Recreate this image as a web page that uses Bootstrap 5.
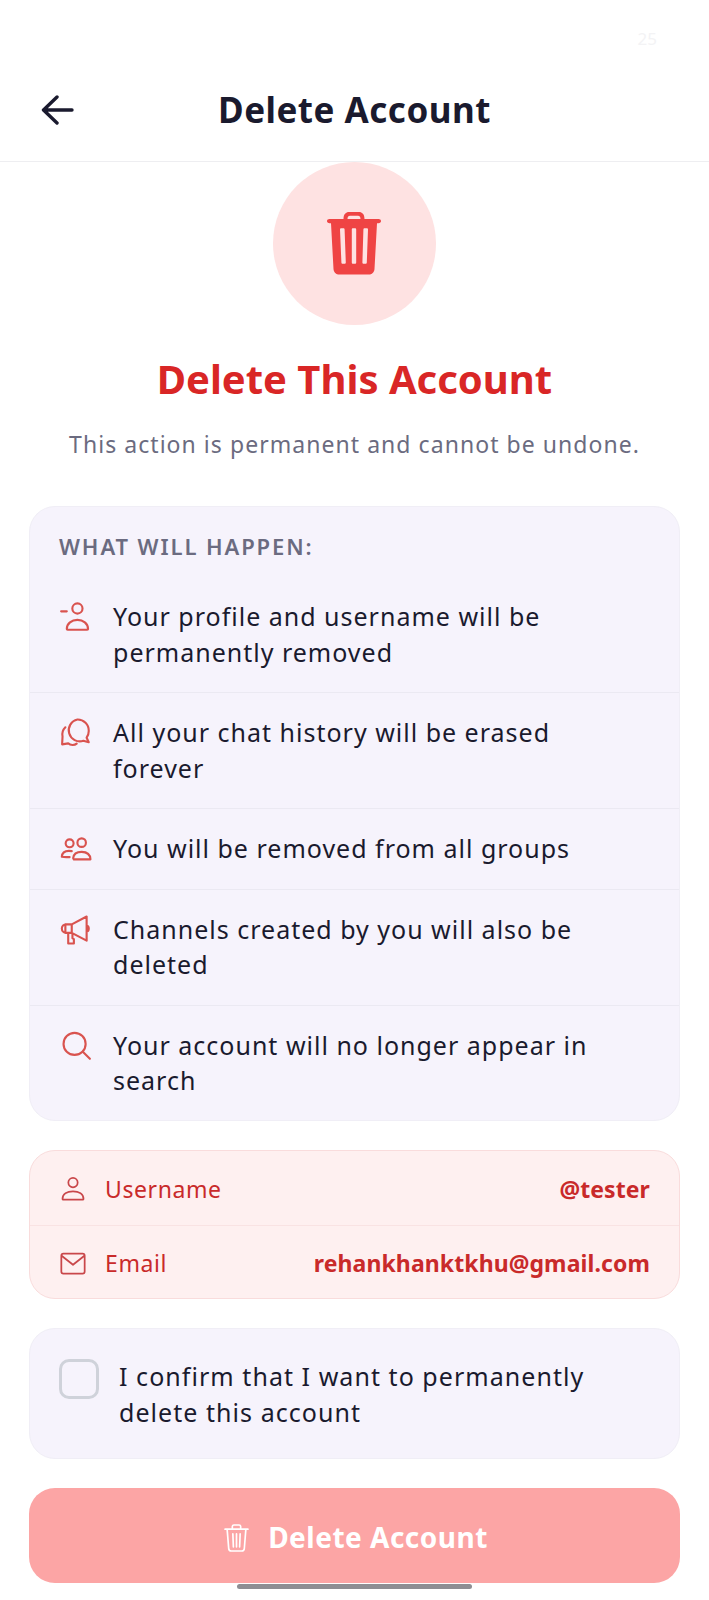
<!DOCTYPE html>
<html lang="en">
<head>
  <meta charset="UTF-8" />
  <meta name="viewport" content="width=device-width, initial-scale=1.0" />
  <title>Delete Account</title>
  <link href="https://cdn.jsdelivr.net/npm/bootstrap@5.3.2/dist/css/bootstrap.min.css" rel="stylesheet" />
  <style>
    body {
      font-family: "Noto Sans", sans-serif;
      color: #1a1a2e;
      background: #fff;
      min-height: 1600px;
      position: relative;
    }
    .status-row { height: 78px; padding: 28px 52px 0 0; font-size: 17px; line-height: 22px; color: #f3f3f5; }
    .top-bar { height: 84px; padding: 0 41px 20px; border-bottom: 1px solid #eeeef1; position: relative; }
    .top-title { font-size: 35px; font-weight: 700; line-height: 1; margin: 0; letter-spacing: .5px; }
    .back-btn { position: absolute; left: 41px; top: 50%; transform: translateY(-50%); margin-top: -10px; line-height: 0; }
    .hero-circle { width: 163px; height: 163px; background: #fee2e2; margin: 0 auto; }
    .hero-circle svg { margin: -2px 1px 0 0; }
    .hero-title { font-size: 40px; font-weight: 700; color: #d92626; line-height: 46px; margin: 31px 0 0; }
    .hero-sub { font-size: 23px; line-height: 32px; color: #6b6b80; margin: 26px 0 0; letter-spacing: 1.05px; }
    .soft-box { background: #f6f3fc; border: 1px solid #f0eef6; border-radius: 26px; margin: 0 29px; }
    .what-box { margin-top: 46px; padding-top: 25px; }
    .what-label { font-size: 22px; line-height: 28px; font-weight: 600; color: #6b6b80; letter-spacing: 1.9px; padding: 0 29px; margin-bottom: 17px; }
    .what-row { padding: 22px 60px 21.7px 29px; gap: 20px; border-bottom: 1px solid #ebe9f2; font-size: 25px; line-height: 35.7px; letter-spacing: 1px; }
    .what-row:last-child { border-bottom: 0; padding-bottom: 21px; }
    .what-row svg { flex: none; width: 34px; height: 34px; margin-top: 1px; }
    .ico { fill: none; stroke: #d9534f; stroke-width: 1.5; stroke-linecap: round; stroke-linejoin: round; }
    .info-box { background: #fef0f0; border: 1px solid #f9dcdc; border-radius: 26px; margin: 29px 29px 0; color: #c92a2a; }
    .info-row { height: 73.5px; padding: 2px 29px 0; font-size: 23px; letter-spacing: .6px; }
    .info-row + .info-row { border-top: 1px solid #f9e3e3; }
    .info-row svg { width: 28px; height: 28px; flex: none; margin-right: 18px; }
    .info-val { margin-left: auto; font-weight: 700; font-size: 23px; color: #c92a2a; letter-spacing: .1px; }
    .info-ico { fill: none; stroke: #c9474a; stroke-width: 1.5; stroke-linecap: round; stroke-linejoin: round; }
    .confirm-box { margin-top: 29px; height: 131px; padding: 29px 29px 0; gap: 20px; font-size: 25px; line-height: 36px; letter-spacing: 1.05px; }
    .check-box { width: 40px; height: 40px; flex: none; border: 3px solid #cfd2da; border-radius: 10px; margin-top: 1px; }
    .delete-btn { display: flex; margin: 29px 29px 0; width: 651px; height: 95px; padding-top: 9px; padding-left: 15px; background: #fca5a5; border: 0; border-radius: 26px; font-size: 28px; font-weight: 700; color: #fff; letter-spacing: .5px; }
    .delete-btn svg { margin-right: 3px; }
    .delete-btn:disabled { background: #fca5a5; color: #fff; opacity: 1; }
    .home-bar { position: absolute; left: 237px; top: 1584px; width: 235px; height: 5px; border-radius: 3px; background: #8e8e93; }
  </style>
</head>
<body>
  <div class="status-row text-end">25</div>

  <div class="top-bar d-flex align-items-center justify-content-center">
    <a class="back-btn" href="#">
      <svg width="34" height="30" viewBox="0 0 34 30" fill="none" stroke="#1a1a2e" stroke-width="3.4" stroke-linecap="round" stroke-linejoin="round"><path d="M31 15H3M16 2 2.500 15 16 28"/></svg>
    </a>
    <h1 class="top-title">Delete Account</h1>
  </div>

  <div class="hero-circle rounded-circle d-flex align-items-center justify-content-center">
    <svg width="54" height="64" viewBox="0 0 54 64"><path fill="#ef4444" d="M16.500 8C16.500 3 19 1 22 1h10c3 0 5.500 2 5.500 7h14c1.500 0 2.500.8 2.500 2 0 1.300-1 2.200-2.500 2.200H50L47.500 58c-.3 3.500-2.500 5.500-6 5.500H12.500c-3.500 0-5.700-2-6-5.500L4 12.200H2.500C1 12.200 0 11.300 0 10c0-1.200 1-2 2.500-2ZM20.500 8h13C33.500 5.500 32.500 4.800 31 4.800h-8c-1.500 0-2.500.7-2.500 3.200Z"/><path fill="#fee2e2" d="M13 18.500c0-.8.5-1.300 1.300-1.300h2c.8 0 1.300.5 1.300 1.300l1.200 33c0 .8-.5 1.300-1.300 1.300h-1.800c-.8 0-1.300-.5-1.300-1.300ZM24.800 18.500c0-.8.5-1.300 1.200-1.300h2c.7 0 1.200.5 1.200 1.300v33c0 .8-.5 1.300-1.200 1.300h-2c-.7 0-1.200-.5-1.200-1.300ZM36.400 18.500c0-.8.5-1.300 1.300-1.300h2c.8 0 1.300.5 1.300 1.300l-1.200 33c0 .8-.5 1.300-1.300 1.300h-1.800c-.8 0-1.300-.5-1.300-1.300Z"/></svg>
  </div>

  <h2 class="hero-title text-center">Delete This Account</h2>
  <p class="hero-sub text-center">This action is permanent and cannot be undone.</p>

  <div class="soft-box what-box">
    <div class="what-label">WHAT WILL HAPPEN:</div>
    <div class="what-row d-flex">
      <svg class="ico" viewBox="0 0 24 24"><circle cx="13" cy="6" r="3.600"/><path d="M5.500 20.500c0-4 3.500-6.500 7.500-6.500s7.500 2.500 7.500 6.500c0 .4-.3.5-.6.500H6.100c-.3 0-.6-.1-.6-.5ZM1.500 8h4"/></svg>
      <div>Your profile and username will be permanently removed</div>
    </div>
    <div class="what-row d-flex">
      <svg class="ico" viewBox="0 0 24 24"><path d="M13 2.500a7.800 7.800 0 0 1 8 8c0 2-.6 3.500-1.500 4.800l1.500 3.200-3.800-1a7.800 7.800 0 1 1-4.200-15Z"/><path d="M4.500 8C2.500 10 2 12 2.500 14.500L2.200 20l4.300-.7c1.500 1.500 4.500 1.500 6 .2"/></svg>
      <div>All your chat history will be erased forever</div>
    </div>
    <div class="what-row d-flex">
      <svg class="ico" viewBox="0 0 24 24"><circle cx="7.500" cy="8" r="2.800"/><circle cx="16" cy="7.500" r="3"/><path d="M10 18.500c.3-3 2.800-4.500 6-4.500s6 1.500 6.200 5.300H10.500ZM9 13.500c-.8-.2-1.500-.2-2-.2-2.700 0-4.800 1.300-5 4.200 1.500.3 3.500.3 5.500.2"/></svg>
      <div>You will be removed from all groups</div>
    </div>
    <div class="what-row d-flex">
      <svg class="ico" viewBox="0 0 24 24"><path d="M9 8 19.500 2.500v17L9 14Z M9 8H5a3 3 0 0 0-3 3c0 1.700 1.300 3 3 3h4Z M4.500 8v6 M6.500 14.500v7h4v-3l-1-.7V14.500 M19.500 9c1 0 1.500 1 1.500 2s-.5 2-1.500 2"/></svg>
      <div>Channels created by you will also be deleted</div>
    </div>
    <div class="what-row d-flex">
      <svg class="ico" viewBox="0 0 24 24"><circle cx="11" cy="10.500" r="7.800"/><path d="m16.800 16 5 5"/></svg>
      <div>Your account will no longer appear in search</div>
    </div>
  </div>

  <div class="info-box">
    <div class="info-row d-flex align-items-center">
      <svg class="info-ico" viewBox="0 0 24 24"><circle cx="12" cy="6.500" r="4"/><path d="M3 20.500c0-4.300 4-6.500 9-6.500s9 2.200 9 6.500c0 .5-.3.700-.7.700H3.700c-.4 0-.7-.2-.7-.7Z"/></svg>
      <span>Username</span>
      <span class="info-val">@tester</span>
    </div>
    <div class="info-row d-flex align-items-center">
      <svg class="info-ico" viewBox="0 0 24 24"><rect x="2" y="4" width="20" height="17" rx="1.800"/><path d="m2.500 6 9.500 7.500L21.500 6"/></svg>
      <span>Email</span>
      <span class="info-val">rehankhanktkhu@gmail.com</span>
    </div>
  </div>

  <div class="soft-box confirm-box d-flex">
    <div class="check-box"></div>
    <div>I confirm that I want to permanently delete this account</div>
  </div>

  <button class="btn delete-btn align-items-center justify-content-center gap-3" disabled>
    <svg width="25" height="31" viewBox="0 0 24 28" fill="none" stroke="#fff" stroke-width="1.600" stroke-linecap="round" stroke-linejoin="round"><path d="M1 6h22M8 6V3.500C8 2.500 8.700 2 9.500 2h5c.8 0 1.500.5 1.500 1.500V6M3 6l1.500 18.500c.1 1.500 1 2.500 2.500 2.500h10c1.500 0 2.400-1 2.500-2.500L21 6M8.500 10.500 9 23M12 10.500V23M15.500 10.500 15 23"/></svg>
    <span>Delete Account</span>
  </button>

  <div class="home-bar"></div>

  <script src="https://cdn.jsdelivr.net/npm/bootstrap@5.3.2/dist/js/bootstrap.bundle.min.js"></script>
</body>
</html>
